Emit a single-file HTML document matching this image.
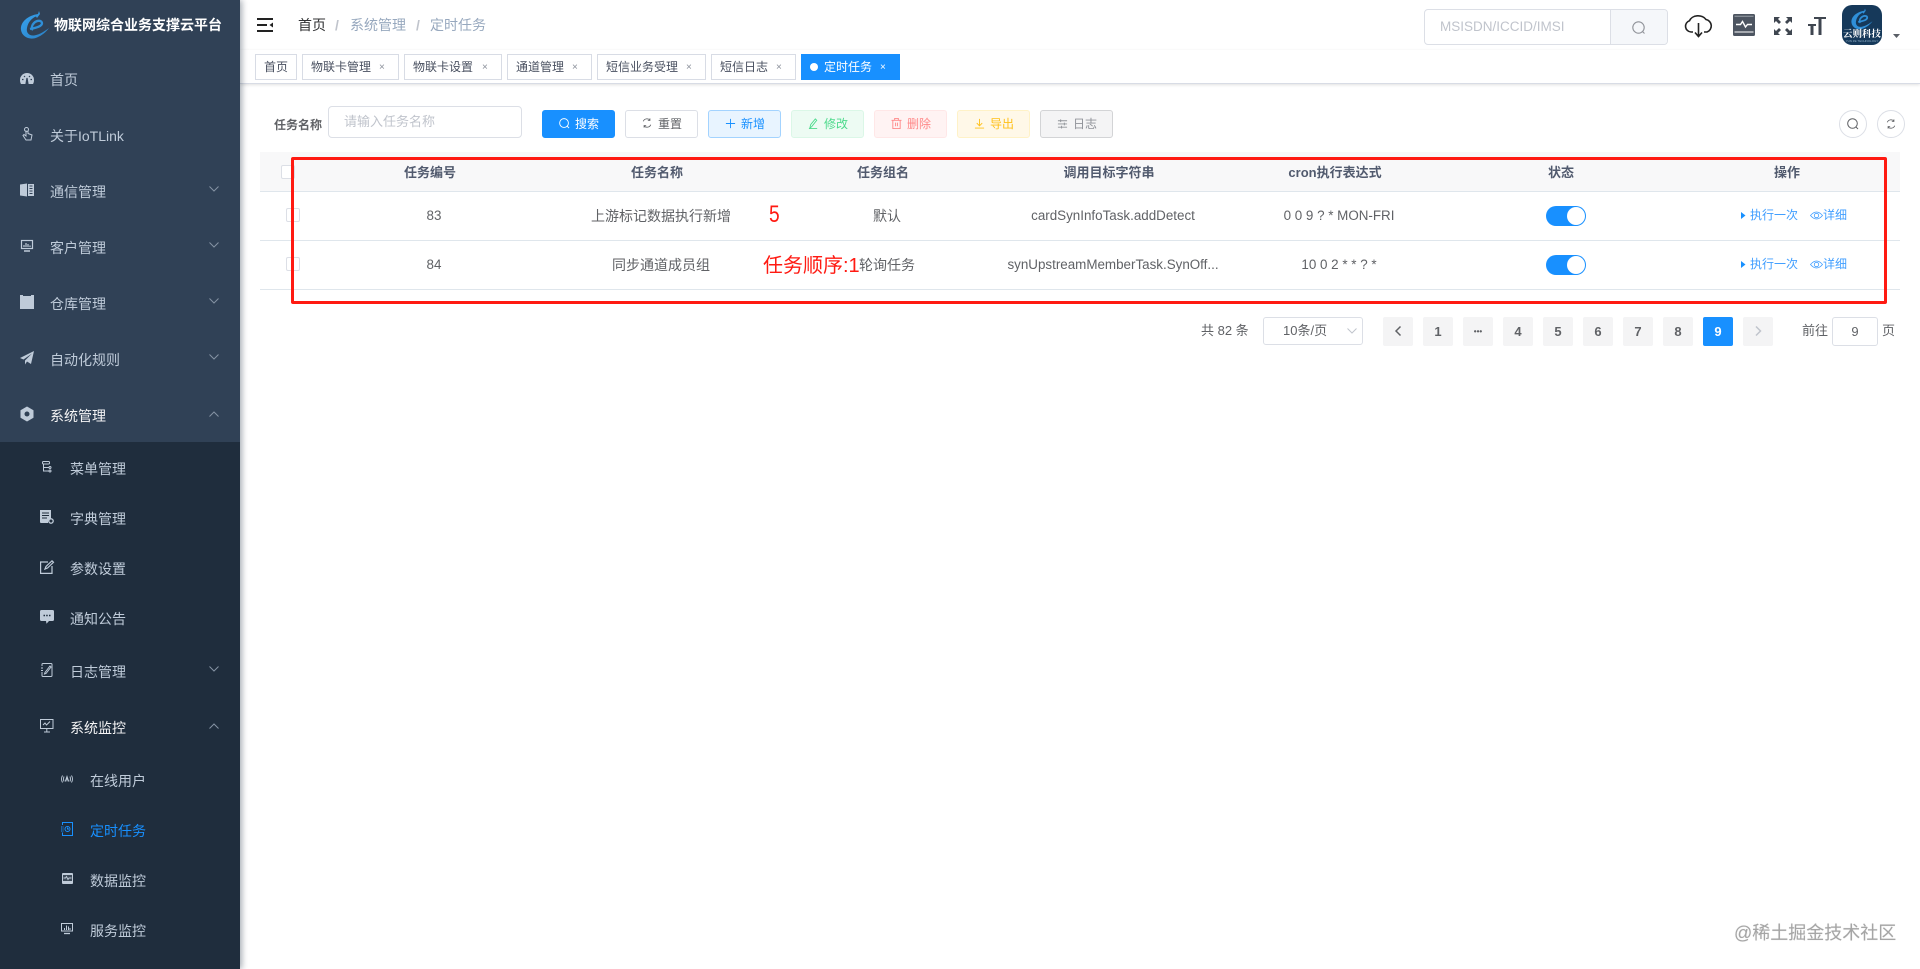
<!DOCTYPE html>
<html lang="zh-CN"><head><meta charset="utf-8"><title>定时任务</title>
<style>
*{box-sizing:border-box}
html,body{margin:0;padding:0;width:1920px;height:969px;overflow:hidden;background:#fff}
body{font-family:"Liberation Sans","Noto Sans CJK SC",sans-serif;font-size:14px;color:#606266;position:relative}
.a,.t{position:absolute;white-space:nowrap}
.t{height:20px;line-height:20px}
svg{position:absolute;overflow:visible;display:block}
#side{position:absolute;left:0;top:0;width:240px;height:969px;background:#304156;box-shadow:2px 0 6px rgba(0,21,41,.35);z-index:3;overflow:hidden}
#sub{position:absolute;left:0;top:442px;width:240px;height:527px;background:#1f2d3d}
#side .t{color:#bfcbd9;font-size:14px}
#side svg.i{fill:#bfcbd9}
.chev{fill:none;stroke:#8593a3;stroke-width:1}
.tag{position:absolute;top:54px;height:26px;line-height:24px;border:1px solid #d8dce5;background:#fff;font-size:12px;color:#495060;padding-left:8px;white-space:nowrap}
.tag i{position:absolute;top:0;font-style:normal;font-size:10px;color:#8a8f99;line-height:26px}
.btn{position:absolute;top:110px;width:73px;height:28px;border:1px solid;border-radius:3px;font-size:12px;line-height:26px;white-space:nowrap}
.btn span{position:absolute;left:32px;top:0}
.btn svg{left:16px;top:7px;fill:none;stroke:currentColor;stroke-width:1}
.th{position:absolute;top:163px;height:20px;line-height:20px;font-size:13px;font-weight:bold;color:#515a6e;transform:translateX(-50%);white-space:nowrap}
.td{position:absolute;height:20px;line-height:20px;font-size:14px;color:#606266;transform:translateX(-50%);white-space:nowrap}
.td.l{font-size:13.4px}
.ln{position:absolute;left:260px;width:1640px;height:1px;background:#dfe6ec}
.cb{position:absolute;width:14px;height:14px;border:1px solid #dcdfe6;border-radius:2px;background:#fff}
.sw{position:absolute;left:1546px;width:40px;height:20px;border-radius:10px;background:#1890ff}
.sw:after{content:"";position:absolute;left:21px;top:1px;width:18px;height:18px;border-radius:50%;background:#fff}
.op{position:absolute;font-size:12px;color:#409eff;height:20px;line-height:20px;white-space:nowrap}
.pg{position:absolute;top:317px;width:30px;height:29px;background:#f4f4f5;border-radius:2px;font-size:13px;font-weight:bold;color:#606266;text-align:center;line-height:29px}
.ro{position:absolute;top:110px;width:28px;height:28px;border:1px solid #dcdfe6;border-radius:50%}
</style></head><body>

<div id="side">
  <div id="sub"></div>
  <svg style="left:0;top:0" width="60" height="50" viewBox="0 0 60 50">
    <defs><linearGradient id="lg" x1="0" y1="0" x2="1" y2="1"><stop offset="0" stop-color="#37a4f0"/><stop offset="1" stop-color="#2a7fc4"/></linearGradient></defs>
    <path d="M39 11L38 14C28 15.500 20 22 21 30C22 37 30 40.500 37 37.500C42 35.500 46 32 49 28C45 31 40 34.500 34 35.500C29 36 26 32.500 27 28C28 22 32 18 36 16.500L37 18L40 14Z" fill="url(#lg)"/>
    <path d="M30 29C34 28 41.500 27 42 23.500C42 20 37 20 34 23C32 25 31 28 33 30" fill="none" stroke="#2f8fd8" stroke-width="2.300"/>
  </svg>
  <div class="t" style="left:54px;top:15px;color:#fff;font-weight:bold;font-size:14px">物联网综合业务支撑云平台</div>

  <svg class="i" style="left:20px;top:72px" width="14" height="14" viewBox="0 0 14 14"><path d="M7 1A7 7 0 0 0 0 8C0 10 .5 11 1 12H13C13.500 11 14 10 14 8A7 7 0 0 0 7 1Z"/><path d="M6 12L7 6L8 12Z M2 7.500H3.500M10.500 7.500H12M4 4L5 5M10 4L9 5" stroke="#304156" stroke-width="1.200" fill="#304156"/></svg>
  <div class="t" style="left:50px;top:70px">首页</div>

  <svg style="left:22px;top:127px;fill:none;stroke:#bfcbd9;stroke-width:1" width="11" height="14" viewBox="0 0 11 14"><circle cx="4.500" cy="2.500" r="2"/><path d="M4 3.500V9L2 7.500L1 8.500L4 13H9L10 8L6 6.500V3.500"/></svg>
  <div class="t" style="left:50px;top:126px">关于IoTLink</div>

  <svg class="i" style="left:20px;top:183px" width="14" height="14" viewBox="0 0 14 14"><path d="M0 1.500L7 .5V13.500L0 12.500Z"/><path d="M8 1H14V13H8Z"/><path d="M9.500 3H12.500M9.500 5.500H12.500M9.500 8H12.500M9.500 10.500H12.500" stroke="#304156"/></svg>
  <div class="t" style="left:50px;top:182px">通信管理</div>
  <svg class="chev" style="left:209px;top:186px" width="10" height="6"><path d="M.5.5L5 5L9.500.5"/></svg>

  <svg style="left:21px;top:240px;fill:none;stroke:#bfcbd9;stroke-width:1.200" width="12" height="12" viewBox="0 0 12 12"><rect x=".5" y=".5" width="11" height="8"/><path d="M3 11H9" stroke-width="1.500"/><path d="M3 7V5M5 7V3M7 7V4M9 7V5.500"/></svg>
  <div class="t" style="left:50px;top:238px">客户管理</div>
  <svg class="chev" style="left:209px;top:242px" width="10" height="6"><path d="M.5.5L5 5L9.500.5"/></svg>

  <svg class="i" style="left:20px;top:295px" width="14" height="14" viewBox="0 0 14 14"><path d="M0 0H3V1H11V0H14V14H0Z"/></svg>
  <div class="t" style="left:50px;top:294px">仓库管理</div>
  <svg class="chev" style="left:209px;top:298px" width="10" height="6"><path d="M.5.5L5 5L9.500.5"/></svg>

  <svg class="i" style="left:20px;top:351px" width="14" height="14" viewBox="0 0 14 14"><path d="M14 0L11 13L7 10.500L5 13.500V9.500L12 2.500L3.500 8.500L0 7Z"/></svg>
  <div class="t" style="left:50px;top:350px">自动化规则</div>
  <svg class="chev" style="left:209px;top:354px" width="10" height="6"><path d="M.5.5L5 5L9.500.5"/></svg>

  <svg style="left:20px;top:407px" width="14" height="14" viewBox="0 0 14 14"><path d="M7 0L13 3.500V10.500L7 14L1 10.500V3.500Z" fill="#bfcbd9" stroke="#bfcbd9" stroke-linejoin="round"/><circle cx="7" cy="7" r="2.500" fill="#304156"/></svg>
  <div class="t" style="left:50px;top:406px;color:#f4f4f5">系统管理</div>
  <svg class="chev" style="left:209px;top:411px" width="10" height="6"><path d="M.5 5.500L5 1L9.500 5.500"/></svg>

  <svg style="left:42px;top:461px;fill:none;stroke:#bfcbd9;stroke-width:1" width="10" height="12" viewBox="0 0 10 12"><rect x=".5" y=".5" width="7" height="2.500" rx="1"/><path d="M1.500 3V10H7M1.500 6.500H7"/><circle cx="8" cy="6.500" r="1"/><circle cx="8" cy="10" r="1"/></svg>
  <div class="t" style="left:70px;top:459px">菜单管理</div>

  <svg style="left:40px;top:510px" width="14" height="14" viewBox="0 0 14 14"><path d="M0 0H11V9A4 4 0 0 0 8 13H1Q0 13 0 12Z" fill="#bfcbd9"/><path d="M2 3H9M2 5.500H9M2 8H7" stroke="#1f2d3d"/><circle cx="11" cy="11" r="2.200" fill="none" stroke="#bfcbd9" stroke-width="1.300"/></svg>
  <div class="t" style="left:70px;top:509px">字典管理</div>

  <svg style="left:40px;top:560px;fill:none;stroke:#bfcbd9;stroke-width:1.200" width="14" height="14" viewBox="0 0 14 14"><path d="M8 2H.6V13.400H12V6"/><path d="M5 9L6 6.500L12 .8L13.500 2.300L7.500 8Z"/></svg>
  <div class="t" style="left:70px;top:559px">参数设置</div>

  <svg style="left:40px;top:610px" width="14" height="14" viewBox="0 0 14 14"><path d="M1.500 0H12.500Q14 0 14 1.500V9.500Q14 11 12.500 11H9L6.500 13.800L6 11H1.500Q0 11 0 9.500V1.500Q0 0 1.500 0Z" fill="#bfcbd9"/><path d="M3.500 5.500h1.500M6.200 5.500h1.500M9 5.500h1.500" stroke="#1f2d3d" stroke-width="1.500"/></svg>
  <div class="t" style="left:70px;top:609px">通知公告</div>

  <svg style="left:41px;top:663px;fill:none;stroke:#bfcbd9;stroke-width:1" width="12" height="14" viewBox="0 0 12 14"><path d="M1 3V1.500Q1 .5 2 .5H10Q11 .5 11 1.500V12.500Q11 13.500 10 13.500H2Q1 13.500 1 12.500V11M0 5H2M0 7.500H2M0 10H2"/><path d="M4 9.500L9 3L10 4L5 10.500L3.500 11Z"/></svg>
  <div class="t" style="left:70px;top:662px">日志管理</div>
  <svg class="chev" style="left:209px;top:666px" width="10" height="6"><path d="M.5.5L5 5L9.500.5"/></svg>

  <svg style="left:40px;top:719px;fill:none;stroke:#bfcbd9;stroke-width:1" width="14" height="14" viewBox="0 0 14 14"><rect x=".5" y=".5" width="12.500" height="9"/><path d="M3 6L5 4L6.500 6L10 2.500M6.800 9.500V12.500M4 13H10"/></svg>
  <div class="t" style="left:70px;top:718px;color:#f4f4f5">系统监控</div>
  <svg class="chev" style="left:209px;top:723px" width="10" height="6"><path d="M.5 5.500L5 1L9.500 5.500"/></svg>

  <svg style="left:61px;top:775px;fill:none;stroke:#bfcbd9;stroke-width:.9" width="12" height="8" viewBox="0 0 12 8"><path d="M1.500 .5Q-.5 4 1.500 7.500M3 1.500Q2 4 3 6.500M10.500 .5Q12.500 4 10.500 7.500M9 1.500Q10 4 9 6.500"/><path d="M4.500 6.500L6 2L7.500 6.500" stroke-width="1.300"/></svg>
  <div class="t" style="left:90px;top:771px">在线用户</div>

  <svg style="left:61px;top:822px;fill:none;stroke:#1890ff;stroke-width:1" width="12" height="14" viewBox="0 0 12 14"><path d="M1.500 3V.5H11.500V13.500H1.500V10.500"/><path d="M0 5H2.500M0 7H2.500M0 9H2.500" stroke-dasharray="1.500 .5"/><circle cx="6.500" cy="7" r="2.500"/><path d="M6.500 5.500V7H8"/></svg>
  <div class="t" style="left:90px;top:821px;color:#1890ff">定时任务</div>

  <svg style="left:62px;top:873px" width="11" height="11" viewBox="0 0 11 11"><rect width="11" height="11" rx="1" fill="#bfcbd9"/><rect x="1" y="2" width="9" height="6" fill="#3c4a59"/><path d="M1.500 5H3.500L4.500 3.500L6 6.500L7 5H9.500" stroke="#bfcbd9" stroke-width=".9" fill="none"/></svg>
  <div class="t" style="left:90px;top:871px">数据监控</div>

  <svg style="left:61px;top:923px;fill:none;stroke:#bfcbd9;stroke-width:1" width="12" height="11" viewBox="0 0 12 11"><rect x=".5" y=".5" width="11" height="7.500"/><path d="M3 10.500H9" stroke-width="1.300"/><path d="M3.500 7V5M5.500 7V2.500M7.500 7V3.500M9 7V5" /></svg>
  <div class="t" style="left:90px;top:921px">服务监控</div>
</div>

<!-- navbar -->
<div class="a" style="left:240px;top:0;width:1680px;height:50px;background:#fff;box-shadow:0 1px 4px rgba(0,21,41,.08)"></div>
<svg style="left:257px;top:18px" width="16" height="14" viewBox="0 0 16 14"><path d="M0 1H16M0 7H10M0 13H16" stroke="#222" stroke-width="2"/><path d="M16 4.500V9.500L12.500 7Z" fill="#222"/></svg>
<div class="t" style="left:298px;top:15px;color:#303133">首页</div>
<div class="t" style="left:335px;top:15px;color:#c0c4cc;font-weight:bold">/</div>
<div class="t" style="left:350px;top:15px;color:#97a8be">系统管理</div>
<div class="t" style="left:416px;top:15px;color:#c0c4cc;font-weight:bold">/</div>
<div class="t" style="left:430px;top:15px;color:#97a8be">定时任务</div>

<div class="a" style="left:1424px;top:9px;width:244px;height:36px;border:1px solid #dcdfe6;border-radius:4px;background:#fff"></div>
<div class="a" style="left:1610px;top:10px;width:57px;height:34px;background:#f5f7fa;border-left:1px solid #dcdfe6;border-radius:0 3px 3px 0"></div>
<div class="t" style="left:1440px;top:17px;color:#c0c4cc;font-size:13.500px">MSISDN/ICCID/IMSI</div>
<svg style="left:1632px;top:21px;fill:none;stroke:#909399;stroke-width:1.100" width="14" height="14" viewBox="0 0 14 14"><circle cx="6.500" cy="6.500" r="5.700"/><path d="M10.500 10.500L12.500 12.500"/></svg>

<svg style="left:1684px;top:13px;fill:none;stroke:#222;stroke-width:1.600" width="30" height="25" viewBox="0 0 30 25"><path d="M9 19H7A5.800 5.800 0 0 1 5.500 7.700A9 7 0 0 1 22 6.500A6.500 6.500 0 0 1 23 19H20"/><path d="M14.500 10V23M11 19.500L14.500 23.500L18 19.500"/></svg>
<svg style="left:1733px;top:14px" width="22" height="22" viewBox="0 0 22 22"><rect width="22" height="22" rx="1.500" fill="#4d5561"/><path d="M1.500 2.200H20.500" stroke="#9aa0a8"/><path d="M1.500 18H20.500" stroke="#fff"/><path d="M3 10.500H7.500L9.500 7.500L12.500 13L14.500 10.500H19" stroke="#fff" stroke-width="1.400" fill="none"/></svg>
<svg style="left:1774px;top:17px" width="18" height="18" viewBox="0 0 18 18" fill="#3f4650"><path d="M0 0H6L4 2L7 5L5 7L2 4L0 6Z"/><path d="M18 0H12L14 2L11 5L13 7L16 4L18 6Z"/><path d="M0 18H6L4 16L7 13L5 11L2 14L0 12Z"/><path d="M18 18H12L14 16L11 13L13 11L16 14L18 12Z"/></svg>
<svg style="left:1808px;top:17px" width="18" height="18" viewBox="0 0 18 18" fill="#3f4650"><path d="M6 0H18V2H13.500V18H10.500V2H6Z"/><path d="M0 7H8V9H5.500V18H2.500V9H0Z"/></svg>
<div class="a" style="left:1842px;top:5px;width:40px;height:40px;border-radius:10px;background:#16395a;overflow:hidden">
  <svg style="left:6px;top:2px" width="28" height="24" viewBox="18 9 34 32"><path d="M39 11L38 14C28 15.500 20 22 21 30C22 37 30 40.500 37 37.500C42 35.500 46 32 49 28C45 31 40 34.500 34 35.500C29 36 26 32.500 27 28C28 22 32 18 36 16.500L37 18L40 14Z" fill="#2f8fd8"/><path d="M30 29C34 28 41.500 27 42 23.500C42 20 37 20 34 23C32 25 31 28 33 30" fill="none" stroke="#2f8fd8" stroke-width="2.300"/></svg>
  <div class="a" style="left:0;width:40px;top:22px;text-align:center;color:#fff;font-size:9.500px;font-weight:bold;line-height:12px;font-family:'Noto Serif CJK SC','Noto Sans CJK SC',serif">云则科技</div>
  <div class="a" style="left:0;width:40px;top:34px;text-align:center;color:#8fb0c8;font-size:3px;line-height:4px">YUN ZE TECHNOLOGY</div>
</div>
<svg style="left:1893px;top:34px" width="8" height="5"><path d="M0 0H7L3.500 4Z" fill="#5a5e66"/></svg>

<!-- tags -->
<div class="a" style="left:240px;top:50px;width:1680px;height:34px;background:#fff;border-bottom:1px solid #d8dce5;box-shadow:0 1px 3px 0 rgba(0,0,0,.12)"></div>
<div class="tag" style="left:255px;width:42px">首页</div>
<div class="tag" style="left:302px;width:97px">物联卡管理<i style="left:76px">×</i></div>
<div class="tag" style="left:404px;width:98px">物联卡设置<i style="left:77px">×</i></div>
<div class="tag" style="left:507px;width:85px">通道管理<i style="left:64px">×</i></div>
<div class="tag" style="left:597px;width:109px">短信业务受理<i style="left:88px">×</i></div>
<div class="tag" style="left:711px;width:85px">短信日志<i style="left:64px">×</i></div>
<div class="tag" style="left:801px;width:99px;background:#1890ff;border-color:#1890ff;color:#fff;padding-left:22px"><b style="position:absolute;left:8px;top:8px;width:8px;height:8px;border-radius:50%;background:#fff"></b>定时任务<i style="left:78px;color:#fff">×</i></div>

<!-- search -->
<div class="t" style="left:274px;top:115px;font-size:12px;font-weight:bold;color:#606266">任务名称</div>
<div class="a" style="left:328px;top:106px;width:194px;height:32px;border:1px solid #dcdfe6;border-radius:4px"></div>
<div class="t" style="left:344px;top:112px;font-size:13px;color:#c0c4cc">请输入任务名称</div>

<div class="btn" style="left:542px;background:#1890ff;border-color:#1890ff;color:#fff"><svg width="11" height="11" viewBox="0 0 12 12"><circle cx="5.500" cy="5.500" r="4.800"/><path d="M9 9L11 11"/></svg><span>搜索</span></div>
<div class="btn" style="left:625px;background:#fff;border-color:#dcdfe6;color:#606266"><svg width="10" height="10" viewBox="0 0 12 12"><path d="M1.500 4A4.800 4.800 0 0 1 9.500 2.500M10.500 8A4.800 4.800 0 0 1 2.500 9.500"/><path d="M9.500 .5V3H7M2.500 11.500V9H5"/></svg><span>重置</span></div>
<div class="btn" style="left:708px;background:#e8f4ff;border-color:#a3d3ff;color:#1890ff"><svg width="11" height="11" viewBox="0 0 12 12"><path d="M6 1V11M1 6H11"/></svg><span>新增</span></div>
<div class="btn" style="left:791px;background:#e7faf0;border-color:#d0f5e0;color:#13ce66;opacity:.75"><svg width="11" height="11" viewBox="0 0 12 12"><path d="M2 11L3 7L8 1L9.500 2.500L4 9.500ZM1 11.500H10"/></svg><span>修改</span></div>
<div class="btn" style="left:874px;background:#ffeded;border-color:#ffdbdb;color:#ff4949;opacity:.65"><svg width="11" height="11" viewBox="0 0 12 12"><path d="M2 3V11.500H10V3M.5 2.500H11.500M4 2V.5H8V2M5 5V9M7 5V9"/></svg><span>删除</span></div>
<div class="btn" style="left:957px;background:#fff8e6;border-color:#fff1c2;color:#ffba00;opacity:.9"><svg width="11" height="11" viewBox="0 0 12 12"><path d="M6 1V8M3 5.500L6 8.500L9 5.500M1 11H11"/></svg><span>导出</span></div>
<div class="btn" style="left:1040px;background:#f4f4f5;border-color:#d3d4d6;color:#909399"><svg width="11" height="11" viewBox="0 0 12 12"><path d="M1 3H11M1 6.500H11M1 10H11"/><path d="M4 1.500V4.500M8 5V8M5 8.500V11.500"/></svg><span>日志</span></div>

<div class="ro" style="left:1839px"><svg style="left:7px;top:7px;fill:none;stroke:#606266;stroke-width:1" width="12" height="12" viewBox="0 0 12 12"><circle cx="5.500" cy="5.500" r="4.800"/><path d="M9 9L11 11"/></svg></div>
<div class="ro" style="left:1877px"><svg style="left:8px;top:8px;fill:none;stroke:#606266;stroke-width:1" width="10" height="10" viewBox="0 0 12 12"><path d="M1.500 4A4.800 4.800 0 0 1 9.500 2.500M10.500 8A4.800 4.800 0 0 1 2.500 9.500"/><path d="M9.500 .5V3H7M2.500 11.500V9H5"/></svg></div>

<!-- table -->
<div class="a" style="left:260px;top:152px;width:1640px;height:39px;background:#f8f8f9"></div>
<div class="ln" style="top:191px"></div>
<div class="ln" style="top:240px"></div>
<div class="ln" style="top:289px"></div>
<div class="cb" style="left:281px;top:165px"></div>
<div class="cb" style="left:286px;top:208px"></div>
<div class="cb" style="left:286px;top:257px"></div>
<div class="th" style="left:430px">任务编号</div>
<div class="th" style="left:657px">任务名称</div>
<div class="th" style="left:883px">任务组名</div>
<div class="th" style="left:1109px">调用目标字符串</div>
<div class="th" style="left:1335px">cron执行表达式</div>
<div class="th" style="left:1561px">状态</div>
<div class="th" style="left:1787px">操作</div>

<div class="td l" style="left:434px;top:206px">83</div>
<div class="td" style="left:661px;top:206px">上游标记数据执行新增</div>
<div class="td" style="left:887px;top:206px">默认</div>
<div class="td l" style="left:1113px;top:206px">cardSynInfoTask.addDetect</div>
<div class="td l" style="left:1339px;top:206px">0 0 9 ? * MON-FRI</div>
<div class="sw" style="top:206px"></div>
<svg style="left:1741px;top:212px" width="5" height="7"><path d="M0 0L4.500 3.500L0 7Z" fill="#1890ff"/></svg>
<div class="op" style="left:1750px;top:205px">执行一次</div>
<svg style="left:1810px;top:211px;fill:none;stroke:#409eff;stroke-width:.8" width="13" height="9" viewBox="0 0 13 9"><path d="M.5 4.500Q6.500 -2.500 12.500 4.500Q6.500 11.500 .5 4.500Z"/><circle cx="6.500" cy="4.500" r="2.200"/></svg>
<div class="op" style="left:1823px;top:205px">详细</div>

<div class="td l" style="left:434px;top:255px">84</div>
<div class="td" style="left:661px;top:255px">同步通道成员组</div>
<div class="td" style="left:887px;top:255px">轮询任务</div>
<div class="td l" style="left:1113px;top:255px">synUpstreamMemberTask.SynOff...</div>
<div class="td l" style="left:1339px;top:255px">10 0 2 * * ? *</div>
<div class="sw" style="top:255px"></div>
<svg style="left:1741px;top:261px" width="5" height="7"><path d="M0 0L4.500 3.500L0 7Z" fill="#1890ff"/></svg>
<div class="op" style="left:1750px;top:254px">执行一次</div>
<svg style="left:1810px;top:260px;fill:none;stroke:#409eff;stroke-width:.8" width="13" height="9" viewBox="0 0 13 9"><path d="M.5 4.500Q6.500 -2.500 12.500 4.500Q6.500 11.500 .5 4.500Z"/><circle cx="6.500" cy="4.500" r="2.200"/></svg>
<div class="op" style="left:1823px;top:254px">详细</div>

<!-- annotation -->
<div class="a" style="left:291px;top:157px;width:1596px;height:147px;border:3px solid #ff1a12;border-radius:2px;z-index:2"></div>
<div class="a" style="left:769px;top:200px;font-size:24px;line-height:30px;color:#ff1a12;transform:scaleX(.8);transform-origin:0 0">5</div>
<div class="a" style="left:763px;top:251px;font-size:20px;line-height:30px;color:#ff1a12">任务顺序:1</div>

<!-- pagination -->
<div class="t" style="left:1201px;top:321px;font-size:13px;color:#606266">共 82 条</div>
<div class="a" style="left:1263px;top:317px;width:100px;height:28px;border:1px solid #dcdfe6;border-radius:3px"></div>
<div class="t" style="left:1283px;top:321px;font-size:13px;color:#606266">10条/页</div>
<svg style="left:1347px;top:328px;fill:none;stroke:#c0c4cc" width="10" height="6"><path d="M.5.5L5 5L9.500.5"/></svg>
<div class="pg" style="left:1383px"><svg style="left:12px;top:9px;fill:none;stroke:#606266;stroke-width:1.500" width="7" height="10"><path d="M5.500.5L1 5L5.500 9.500"/></svg></div>
<div class="pg" style="left:1423px">1</div>
<div class="pg" style="left:1463px;font-size:8px;letter-spacing:0">•••</div>
<div class="pg" style="left:1503px">4</div>
<div class="pg" style="left:1543px">5</div>
<div class="pg" style="left:1583px">6</div>
<div class="pg" style="left:1623px">7</div>
<div class="pg" style="left:1663px">8</div>
<div class="pg" style="left:1703px;background:#1890ff;color:#fff">9</div>
<div class="pg" style="left:1743px"><svg style="left:12px;top:9px;fill:none;stroke:#c0c4cc;stroke-width:1.500" width="7" height="10"><path d="M1 .5L5.500 5L1 9.500"/></svg></div>
<div class="t" style="left:1802px;top:321px;font-size:13px;color:#606266">前往</div>
<div class="a" style="left:1832px;top:317px;width:46px;height:29px;border:1px solid #dcdfe6;border-radius:3px;text-align:center;line-height:27px;font-size:13px;color:#606266">9</div>
<div class="t" style="left:1882px;top:321px;font-size:13px;color:#606266">页</div>

<div class="a" style="left:1734px;top:920px;font-size:18px;line-height:26px;color:#a5a5a5;text-shadow:0 0 1px #ddd">@稀土掘金技术社区</div>
</body></html>
